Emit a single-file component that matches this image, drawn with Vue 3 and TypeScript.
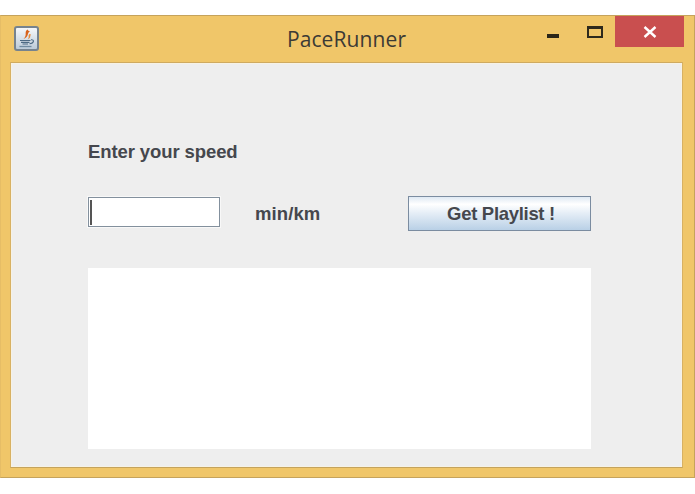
<script setup lang="ts">
import { ref } from 'vue'

const speed = ref('')
</script>

<template>
  <div class="window">
    <header class="titlebar">
      <div class="app-icon">
        <svg width="19" height="20" viewBox="0 0 19 20">
          <path d="M10.5 0.5C6.5 3.5 11 5.5 6.5 10C12.5 7.5 9.5 4.5 13 2C11 2.4 11.5 1.4 10.5 0.5Z" fill="#d9631c" />
          <path d="M12.5 5C10.5 7 13 8 10.5 10.5C14.5 9 12.5 7 14 5.6Z" fill="#e58a3a" />
          <path d="M3 11.5H13.5M4 13.4H12.5M5.5 15H11" stroke="#4d6a84" stroke-width="1.2" fill="none" />
          <path d="M14 10.8C17.5 10.2 17.5 14.2 12.5 14.8" stroke="#4d6a84" stroke-width="1.1" fill="none" />
          <path d="M2.5 17.5H14.5" stroke="#6f8aa0" stroke-width="1.3" />
        </svg>
      </div>
      <div class="title">PaceRunner</div>
      <div class="controls">
        <div class="btn-min"></div>
        <div class="btn-max"></div>
        <div class="btn-close">
          <svg width="14" height="14" viewBox="0 0 14 14">
            <path d="M1.5 2L12.5 12M12.5 2L1.5 12" stroke="#fff" stroke-width="2.4" />
          </svg>
        </div>
      </div>
    </header>

    <main class="content">
      <div class="form">
        <label class="speed-label">Enter your speed</label>
        <div class="row">
          <div class="field">
            <span class="caret"></span>
            <input v-model="speed" type="text" />
          </div>
          <span class="unit">min/km</span>
          <button class="submit" type="button">Get Playlist !</button>
        </div>
        <div class="output"></div>
      </div>
    </main>
  </div>
</template>

<style>
html,
body {
  margin: 0;
  background: #fff;
}
</style>

<style scoped>
.window {
  box-sizing: border-box;
  width: 695px;
  height: 463px;
  margin-top: 15px;
  background: #f0c669;
  border: 1px solid #c5a35c;
  border-left-color: #e6bd66;
  display: flex;
  flex-direction: column;
  padding: 0 11px 9px 9px;
}

.titlebar {
  height: 46px;
  flex: none;
  display: flex;
  align-items: flex-start;
  position: relative;
}

.app-icon {
  box-sizing: border-box;
  width: 25px;
  height: 25px;
  margin: 10px 0 0 4px;
  border: 2px solid #76838e;
  border-radius: 3px;
  background: linear-gradient(#f5f7f9, #bccbd9);
  display: flex;
  align-items: center;
  justify-content: center;
}

.title {
  position: absolute;
  left: 0;
  right: 0;
  top: 8px;
  text-align: center;
  font-family: "Open Sans", sans-serif;
  font-size: 21px;
  letter-spacing: 0.1px;
  line-height: 30px;
  color: #3c3a35;
}

.controls {
  margin-left: auto;
  margin-right: -1px;
  display: flex;
  align-items: flex-start;
  position: relative;
}

.btn-min {
  width: 12px;
  height: 4px;
  margin: 18px 0 0 0;
  background: #2b2618;
}

.btn-max {
  box-sizing: border-box;
  width: 16px;
  height: 12px;
  margin: 10px 12px 0 28px;
  border: 2px solid #2e2a1c;
  border-top-width: 3px;
}

.btn-close {
  width: 69px;
  height: 31px;
  margin-top: 0;
  background: #c94f4f;
  display: flex;
  align-items: center;
  justify-content: center;
}

.content {
  flex: 1;
  background: #eeeeee;
  border: 1px solid #c9a55e;
  border-color: #cfaa60 #d8b163 #c5a35c #d8b163;
  box-shadow: inset 0 0 0 1px #f6f2e6;
  padding: 76px 0 0 77px;
}

.form {
  width: 503px;
  display: flex;
  flex-direction: column;
  font-family: "Liberation Sans", Arial, sans-serif;
  font-weight: 700;
  color: #45474d;
}

.speed-label {
  font-size: 18.5px;
  line-height: 26px;
  letter-spacing: -0.1px;
}

.row {
  display: flex;
  align-items: center;
  margin-top: 31px;
  height: 35px;
}

.field {
  box-sizing: border-box;
  width: 132px;
  height: 30px;
  margin-top: -3px;
  background: #fff;
  border: 1px solid #83909d;
  box-shadow: 0 0 0 1px #f8f8f8;
  position: relative;
}

.field input {
  width: 100%;
  height: 100%;
  box-sizing: border-box;
  border: 0;
  padding: 0 4px;
  background: transparent;
  outline: none;
}

.caret {
  position: absolute;
  left: 1px;
  top: 2px;
  bottom: 1px;
  width: 2px;
  background: #555;
}

.unit {
  font-size: 18.5px;
  letter-spacing: 0.1px;
  margin-left: 35px;
  padding-top: 1px;
}

.submit {
  box-sizing: border-box;
  width: 183px;
  height: 35px;
  margin-left: auto;
  padding: 1px 0 0 3px;
  border: 1px solid #7b8ca0;
  background: linear-gradient(#dfe9f3 0%, #ffffff 22%, #e4edf6 50%, #b9d0e6 100%);
  font-family: inherit;
  font-weight: 700;
  font-size: 18.5px;
  letter-spacing: -0.3px;
  color: #45474d;
}

.output {
  height: 181px;
  margin-top: 37px;
  background: #fff;
}
</style>
